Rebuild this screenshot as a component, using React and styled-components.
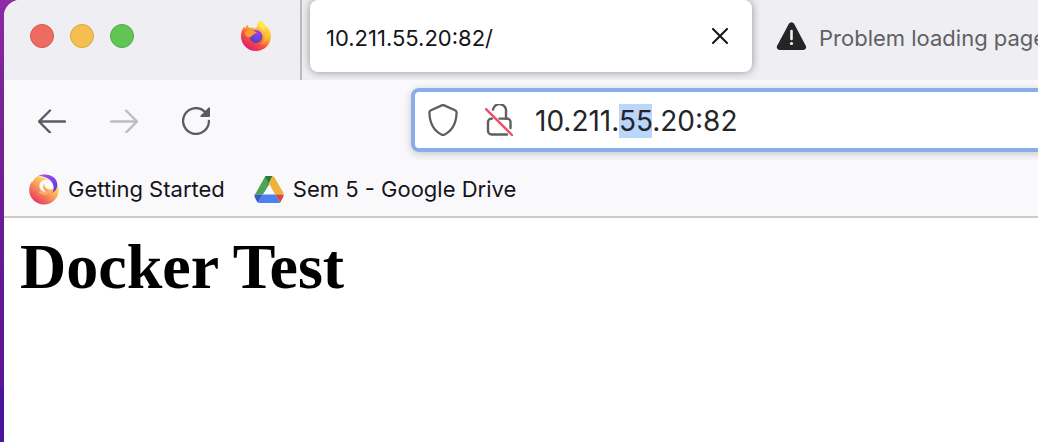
import React, { useEffect, useRef } from "react";
import styled, { createGlobalStyle } from "styled-components";

const GlobalStyle = createGlobalStyle`
  * { box-sizing: border-box; }
  body { margin: 0; background: #fff; overflow-x: hidden; }
  button { padding: 0; border: 0; background: none; font: inherit; color: inherit; }
  svg { display: block; flex: none; }
`;

const Desktop = styled.div`
  min-height: 100vh;
  padding-left: 4px;
  display: flex;
  background: linear-gradient(180deg, #8f2aa8 0, #7b2496 80px, #661a94 260px, #5a1597 388px, #47149a 390px, #47149a 100%);
`;

const BrowserWindow = styled.div`
  flex: 1;
  min-width: 0;
  display: flex;
  flex-direction: column;
  overflow: clip;
  border-top-left-radius: 16px;
  background: #fff;
  font-family: Inter, "Liberation Sans", sans-serif;
`;

const TabBar = styled.header`
  height: 80px;
  display: flex;
  align-items: stretch;
  overflow: clip;
  background: #efeef2;
`;

const WindowControls = styled.div`
  display: flex;
  align-items: center;
  gap: 16px;
  padding: 0 106px 8px 26px;
`;

const ControlDot = styled.button`
  width: 24px;
  height: 24px;
  border: 1px solid ${(p) => p.$edge};
  border-radius: 50%;
  background: ${(p) => p.$fill};
`;

const PinnedTab = styled.button`
  flex: none;
  width: 62px;
  padding: 0 30px 8px 0;
  display: flex;
  align-items: center;
  border-right: 2px solid #bbbbbe;
`;

const Tabs = styled.div`
  display: flex;
  align-items: flex-start;
  padding-left: 8px;
`;

const Tab = styled.div`
  flex: none;
  width: 442px;
  height: 72px;
  display: flex;
  align-items: center;
  gap: 12px;
  padding: 0 24px 0 16px;
  border-radius: 8px;
  font-size: 22px;
  line-height: 28px;
  white-space: nowrap;
  color: ${(p) => (p.$active ? "#15141a" : "#616065")};
  background: ${(p) => (p.$active ? "#fff" : "transparent")};
  box-shadow: ${(p) => (p.$active ? "0 0 8px rgba(0, 0, 0, 0.4)" : "none")};
`;

const InactiveTab = styled(Tab)`
  padding-left: 24px;
`;

const TabTitle = styled.span`
  flex: 1;
  padding-top: 4px;
`;

const NavBar = styled.nav`
  height: 80px;
  display: flex;
  align-items: center;
  padding: 0 0 0 28px;
  background: #f9f9fb;
`;

const NavButtons = styled.div`
  flex: none;
  width: 379px;
  display: flex;
  gap: 32px;
  padding-top: 2px;
`;

const NavButton = styled.button`
  width: 40px;
  height: 40px;
  display: flex;
  align-items: center;
  justify-content: center;
  color: #5b5b66;

  &:disabled { color: #bdbdc1; }
`;

const AddressBar = styled.div`
  flex: 1;
  min-width: 0;
  height: 64px;
  display: flex;
  align-items: center;
  gap: 22px;
  margin-right: -8px;
  padding-left: 13px;
  border: 4px solid #8aaee9;
  border-radius: 8px;
  background: #fff;
  box-shadow: 0 2px 8px rgba(0, 0, 0, 0.2);
`;

const SiteStatus = styled.div`
  display: flex;
  align-items: center;
  gap: 27px;
`;

const AddressInput = styled.input`
  flex: 1;
  min-width: 0;
  height: 40px;
  padding: 2px 0 0;
  border: 0;
  outline: 0;
  background: transparent;
  color: #252529;
  caret-color: transparent;
  font-family: inherit;
  font-size: 28px;
  line-height: 34px;

  &::selection { background: #bad6fb; color: #252529; }
`;

const BookmarksBar = styled.div`
  height: 58px;
  display: flex;
  align-items: center;
  gap: 28px;
  padding: 2px 24px 0;
  border-bottom: 2px solid #cccccd;
  background: #f9f9fb;
`;

const Bookmark = styled.a`
  display: flex;
  align-items: center;
  gap: 8px;
  color: #15141a;
  font-size: 22px;
  line-height: 28px;
  text-decoration: none;
  white-space: nowrap;
`;

const Page = styled.main`
  flex: 1;
  padding: 12px 16px;
  background: #fff;
`;

const PageHeading = styled.h1`
  margin: 0;
  color: #000;
  font: bold 64px/74px "Liberation Serif", serif;
`;

function FirefoxIcon() {
  return (
    <svg width="32" height="32" viewBox="0 0 32 32" aria-hidden="true">
      <defs>
        <linearGradient id="fxBody" x1="0.8" y1="0.1" x2="0.25" y2="0.95">
          <stop offset="0" stopColor="#fff05a" />
          <stop offset="0.35" stopColor="#ffb02e" />
          <stop offset="0.65" stopColor="#f9533c" />
          <stop offset="1" stopColor="#dc1d75" />
        </linearGradient>
        <radialGradient id="fxGlobe" cx="0.6" cy="0.2" r="0.9">
          <stop offset="0" stopColor="#a63cf0" />
          <stop offset="0.5" stopColor="#7046d4" />
          <stop offset="1" stopColor="#493caf" />
        </radialGradient>
      </defs>
      <path d="M20.5 0C24 2 25.2 5 26 7.2c.6-.6.5-1.200.4-1.800C29 8 31 11.600 31 16c0 8.400-6.700 15-15 15S1 24.600 1 16.200C1 12 2.400 8.600 4.400 6.600c0 1 .2 1.700.5 2.200C5.600 7 6.500 5.600 8 4.400c0 1.800.5 2.800 1.400 3.500 2-.6 4-.4 5.600.6 1-1 2-1.300 2.400-1.400C17 4 18.200 1.600 20.500 0Z" fill="url(#fxBody)" />
      <circle cx="16" cy="16.500" r="6.500" fill="url(#fxGlobe)" />
      <path d="M5 12c3-2.600 7.500-3 9.600-.5 1.200 0 1.900.3 1.900.8-.2 1.200-2.400 1.400-3.400 2.500-1.200 1.300-2.200 2.200-3.500 2.400C7 18 4.800 15 5 12Z" fill="#ff9a36" />
      <path d="M20.300 1c3 3 5 7.200 4.400 11.500-1.200-3.300-4.700-4.700-6.500-6.400 0-1.800.6-3.700 2.100-5.100Z" fill="#ffe756" />
      <path d="M24 9c3 5.500 2 12-3.600 15.800 7-2 9.400-9 7-14.600Z" fill="#ffc33b" opacity="0.7" />
    </svg>
  );
}

function WarningIcon() {
  return (
    <svg width="31" height="32" viewBox="0 0 31 32" aria-hidden="true">
      <path d="M12.900 3.700a3 3 0 0 1 5.200 0l11.800 22.200A3 3 0 0 1 27.500 30h-24a3 3 0 0 1-2.500-4.100Z" fill="#252525" />
      <path d="M15.500 11v8" stroke="#efeef2" strokeWidth="2.600" strokeLinecap="round" />
      <circle cx="15.500" cy="23.500" r="1.600" fill="#efeef2" />
    </svg>
  );
}

function CloseIcon() {
  return (
    <svg width="16" height="16" viewBox="0 0 16 16" aria-hidden="true">
      <path d="M1 1l14 14M15 1 1 15" stroke="#15141a" strokeWidth="2" strokeLinecap="round" />
    </svg>
  );
}

function ArrowIcon({ forward }) {
  return (
    <svg width="28" height="24" viewBox="0 0 28 24" fill="none" stroke="currentColor" strokeWidth="2.400" strokeLinecap="round" strokeLinejoin="round" aria-hidden="true">
      <path d={forward ? "M1 12.500h26M16 1.500l11 11-11 11" : "M27 12.500H1M12 1.500l-11 11 11 11"} />
    </svg>
  );
}

function ReloadIcon() {
  return (
    <svg width="28" height="28" viewBox="0 0 28 28" aria-hidden="true">
      <path d="M26.900 14A12.900 12.900 0 1 1 22.500 4.300" fill="none" stroke="currentColor" strokeWidth="2.300" strokeLinecap="round" />
      <path d="M28 1.200V9a1 1 0 0 1-1 1h-7.800a.8.8 0 0 1-.6-1.400l8-8A.8.8 0 0 1 28 1.200Z" fill="currentColor" />
    </svg>
  );
}

function ShieldIcon() {
  return (
    <svg width="30" height="32" viewBox="0 0 30 32" fill="none" stroke="#5f5f60" strokeWidth="2.300" strokeLinejoin="round" aria-hidden="true">
      <path d="M13.800 1.400a2.500 2.500 0 0 1 2.400 0L27 6.300c1.100.5 1.700 1.300 1.600 2.500C28.200 19.500 24.500 26.800 16.200 30.700a2.500 2.500 0 0 1-2.400 0C5.500 26.800 1.800 19.500 1.400 8.800 1.300 7.600 1.900 6.800 3 6.300Z" />
    </svg>
  );
}

function InsecureLockIcon() {
  return (
    <svg width="28" height="32" viewBox="0 0 28 32" fill="none" strokeWidth="2.400" strokeLinecap="round" aria-hidden="true">
      <path d="M8 5.500A6.600 6.600 0 0 1 21 8v6.500h1a3.500 3.500 0 0 1 3.500 3.500V24" stroke="#5f5f60" />
      <path d="M7 14.600H6.500a3.500 3.500 0 0 0-3.500 3.500V27a3.500 3.500 0 0 0 3.500 3.500H22" stroke="#5f5f60" />
      <path d="M14.500 14.600h7" stroke="#5f5f60" />
      <path d="M1 5.200 27 31" stroke="#ed4d6c" />
    </svg>
  );
}

function GettingStartedIcon() {
  return (
    <svg width="32" height="32" viewBox="0 0 32 32" aria-hidden="true">
      <defs>
        <linearGradient id="gsSwirl" x1="0.8" y1="0.25" x2="0.25" y2="0.95">
          <stop offset="0" stopColor="#ffe06a" />
          <stop offset="0.45" stopColor="#fb9a58" />
          <stop offset="1" stopColor="#e5395f" />
        </linearGradient>
        <linearGradient id="gsArc" x1="0" y1="0" x2="1" y2="1">
          <stop offset="0" stopColor="#c04be0" />
          <stop offset="0.500" stopColor="#8243f0" />
          <stop offset="1" stopColor="#5538d8" />
        </linearGradient>
      </defs>
      <path d="M7.500 4.800C9.500 3 12 2.200 14.500 2.300c-2 .7-3 1.300-3.600 2.200C14 3.800 18 4.600 20.500 7c-5-.8-8.700 1.500-9 5.500-.3 4.200 3.200 6.800 6.800 6.300-2.800-1.500-4-4.800-2.200-8.300.2 3.500 2.900 6.200 6.200 5.900 3.600-.3 5.700-3.400 4.900-7.400 2.300 1.800 3.500 4.800 3.500 8C30.700 25.300 24.200 31.500 16 31.500S1.200 25 1.200 17c0-3.600 1.200-6.800 3.200-9.200 0 1 .1 1.300.3 1.700C5.400 7.500 6.300 5.900 7.500 4.800Z" fill="url(#gsSwirl)" />
      <path d="M12 17c2 2.500 6 3 10 1l-4 4-7-2Z" fill="#fbb45c" />
      <path d="M10.500 3C19-1.200 29.800 3.800 29.300 12.300c-.2 3.700-2.200 6.200-4.900 7.400C28.500 12.500 22.500 3.300 10.500 3Z" fill="url(#gsArc)" />
    </svg>
  );
}

function DriveIcon() {
  return (
    <svg width="32" height="32" viewBox="0 0 32 32" aria-hidden="true">
      <path d="M2 21.500 11.500 4.500a3 3 0 0 1 1.300-1.300L16.500 11 9.800 21.500H1.500Z" fill="#4fa354" />
      <path d="M12 3.600c.8-.5 1.500-.6 2.500-.6h5L16 10.500Z" fill="#32793d" />
      <path d="M19.500 3a3 3 0 0 1 1.800 1.200L30 19c.5.800.7 1.600.6 2.500h-8.400L16 10.500Z" fill="#f0b23e" />
      <path d="M1.500 21.500H10L5 29.400c-.5-.2-1-.7-1.200-1.200L2 24.800c-.5-1-.6-2-.5-3.300Z" fill="#315fc7" />
      <path d="M10 21.500h12.200l5 7.900c-.5.300-1.200.6-2 .6H7c-.8 0-1.500-.2-2-.6Z" fill="#4a80ef" />
      <path d="M22.200 21.500h8.400c0 1.200-.1 2.300-.7 3.300l-2 3.500c-.2.500-.4.800-.7 1.100Z" fill="#d94735" />
    </svg>
  );
}

export default function App() {
  const addressRef = useRef(null);

  useEffect(() => {
    addressRef.current.focus({ preventScroll: true });
    addressRef.current.setSelectionRange(7, 9);
  }, []);

  return (
    <>
      <GlobalStyle />
      <Desktop>
        <BrowserWindow>
          <TabBar>
            <WindowControls>
              <ControlDot $fill="#ed6b60" $edge="#d8554b" aria-label="Close window" />
              <ControlDot $fill="#f5bf50" $edge="#dca43c" aria-label="Minimize window" />
              <ControlDot $fill="#61c455" $edge="#4dac42" aria-label="Zoom window" />
            </WindowControls>
            <PinnedTab aria-label="Firefox">
              <FirefoxIcon />
            </PinnedTab>
            <Tabs>
              <Tab $active>
                <TabTitle>10.211.55.20:82/</TabTitle>
                <button aria-label="Close tab"><CloseIcon /></button>
              </Tab>
              <InactiveTab>
                <WarningIcon />
                <TabTitle>Problem loading page</TabTitle>
              </InactiveTab>
            </Tabs>
          </TabBar>
          <NavBar>
            <NavButtons>
              <NavButton aria-label="Back"><ArrowIcon /></NavButton>
              <NavButton aria-label="Forward" disabled><ArrowIcon forward /></NavButton>
              <NavButton aria-label="Reload"><ReloadIcon /></NavButton>
            </NavButtons>
            <AddressBar>
              <SiteStatus>
                <ShieldIcon />
                <InsecureLockIcon />
              </SiteStatus>
              <AddressInput ref={addressRef} type="text" defaultValue="10.211.55.20:82" aria-label="Address" spellCheck={false} />
            </AddressBar>
          </NavBar>
          <BookmarksBar>
            <Bookmark href="#getting-started">
              <GettingStartedIcon />
              Getting Started
            </Bookmark>
            <Bookmark href="#drive">
              <DriveIcon />
              Sem 5 - Google Drive
            </Bookmark>
          </BookmarksBar>
          <Page>
            <PageHeading>Docker Test</PageHeading>
          </Page>
        </BrowserWindow>
      </Desktop>
    </>
  );
}
